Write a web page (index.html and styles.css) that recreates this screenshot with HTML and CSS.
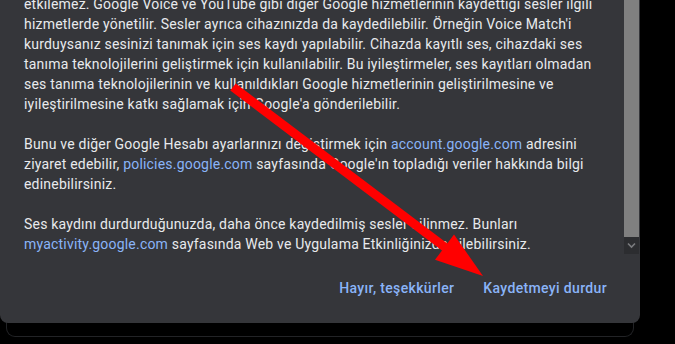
FILE: index.html
```html
<!DOCTYPE html>
<html lang="tr">
<head>
<meta charset="utf-8">
<link rel="stylesheet" href="styles.css">
</head>
<body>
<div class="frame">
  <div class="dialog">
    <div class="scroll">
      <div class="content">
        <p>etkilemez. Google Voice ve YouTube gibi diğer Google hizmetlerinin kaydettiği sesler ilgili hizmetlerde yönetilir. Sesler ayrıca cihazınızda da kaydedilebilir. Örneğin Voice Match'i kurduysanız sesinizi tanımak için ses kaydı yapılabilir. Cihazda kayıtlı ses, cihazdaki ses tanıma teknolojilerini geliştirmek için kullanılabilir. Bu iyileştirmeler, ses kayıtları olmadan ses tanıma teknolojilerinin ve kullanıldıkları Google hizmetlerinin geliştirilmesine ve iyileştirilmesine katkı sağlamak için Google'a gönderilebilir.</p>
        <p>Bunu ve diğer Google Hesabı ayarlarınızı değiştirmek için <a class="link">account.google.com</a> adresini ziyaret edebilir, <a class="link">policies.google.com</a> sayfasında Google'ın topladığı veriler hakkında bilgi edinebilirsiniz.</p>
        <p>Ses kaydını durdurduğunuzda, daha önce kaydedilmiş sesler silinmez. Bunları <a class="link">myactivity.google.com</a> sayfasında Web ve Uygulama Etkinliğinizde silebilirsiniz.</p>
      </div>
      <div class="scrollbar">
        <div class="thumb"></div>
        <div class="arrow-down">
          <svg width="15" height="17" viewBox="0 0 15 17"><path d="M4 6.5 L7.5 10 L11 6.5" fill="none" stroke="#7a7b7e" stroke-width="1.6"/></svg>
        </div>
      </div>
    </div>
    <div class="actions">
      <button class="btn">Hayır, teşekkürler</button>
      <button class="btn">Kaydetmeyi durdur</button>
    </div>
  </div>
</div>
<svg class="annotation" width="675" height="344" viewBox="0 0 675 344">
  <line x1="233" y1="87" x2="446" y2="248" stroke="#ff0000" stroke-width="9"/>
  <polygon points="483,276 435,259.8 454,234.6" fill="#ff0000"/>
</svg>
</body>
</html>
```
FILE: styles.css
```css
html, body {
  margin: 0;
  padding: 0;
}
body {
  width: 675px;
  height: 344px;
  overflow: hidden;
  background: #000;
  position: relative;
  font-family: Roboto, "Noto Sans", sans-serif;
}
.frame {
  box-sizing: border-box;
  margin-left: 6px;
  width: 628px;
  height: 337px;
  border: 1px solid #222326;
  border-top: none;
  border-radius: 0 0 9px 9px;
}
.dialog {
  margin-left: -7px;
  width: 640px;
  height: 323px;
  background: #35363a;
  border-radius: 0 0 8px 8px;
  display: flex;
  flex-direction: column;
}
.scroll {
  height: 254px;
  display: flex;
  overflow: hidden;
}
.content {
  flex: 1;
  padding: 0 24px;
  margin-top: -6px;
  font-size: 14px;
  letter-spacing: 0.2px;
  line-height: 20px;
  color: #e8eaed;
}
.content p {
  margin: 0 0 20px;
}
.link {
  color: #8ab4f8;
}
.scrollbar {
  width: 16px;
  display: flex;
  flex-direction: column;
}
.thumb {
  flex: 1;
  background: #808080;
  margin-right: 1px;
}
.arrow-down {
  height: 17px;
  background: #2c2d30;
  margin-right: 1px;
  display: flex;
}
.actions {
  display: flex;
  justify-content: flex-end;
  gap: 13px;
  padding: 18px 25px 0 0;
}
.btn {
  height: 32px;
  padding: 0 8px;
  border: none;
  background: transparent;
  color: #8ab4f8;
  font-family: Roboto, "Noto Sans", sans-serif;
  font-size: 14px;
  font-weight: 500;
  letter-spacing: 0.35px;
}
.annotation {
  position: absolute;
  left: 0;
  top: 0;
  pointer-events: none;
}
```
